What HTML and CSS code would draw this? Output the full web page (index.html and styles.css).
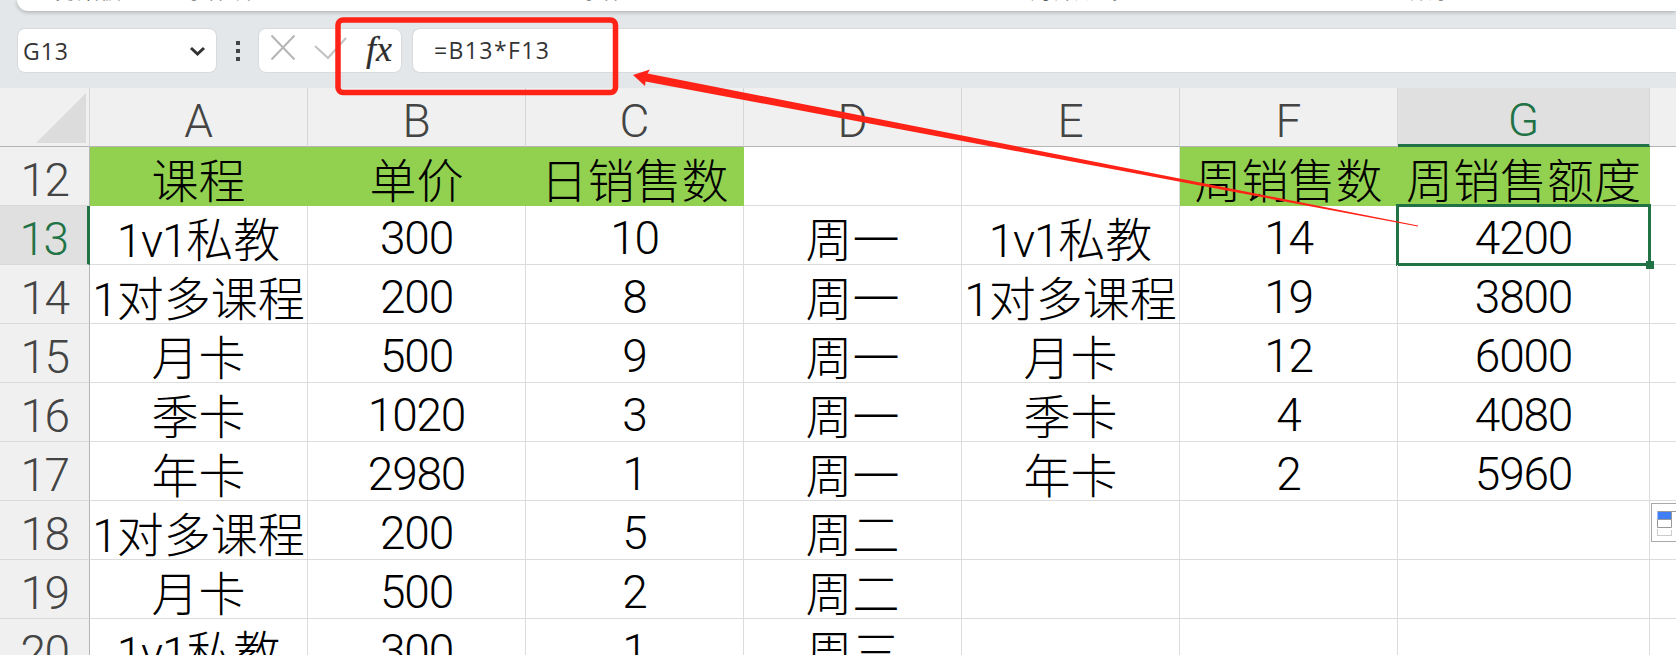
FILE: index.html
```html
<!DOCTYPE html>
<html lang="zh-CN">
<head>
<meta charset="utf-8">
<title>表格</title>
<link rel="stylesheet" href="styles.css">
</head>
<body>
<div class="app">
  <div class="ribbon">
    <span class="group-label">剪贴板</span>
    <span class="group-label">字体设置</span>
    <span class="group-label">字体</span>
    <span class="group-label">对齐方式</span>
    <span class="group-label">数字</span>
  </div>
  <div class="formula-bar">
    <div class="name-box">
      <span>G13</span>
      <svg class="chevron" width="17" height="10" viewBox="0 0 17 10"><path d="M2 2l6.500 6 6.500-6" fill="none" stroke="#333" stroke-width="3"/></svg>
    </div>
    <div class="dots"><i></i><i></i><i></i></div>
    <div class="btn-group">
      <svg class="btn-x" width="26" height="27" viewBox="0 0 26 27"><path d="M1.500 1.500l23 24M24.500 1.500l-23 24" fill="none" stroke="#b5b5b5" stroke-width="2"/></svg>
      <svg class="btn-check" width="33" height="23" viewBox="0 0 33 23"><path d="M1 9l13 12L32 1" fill="none" stroke="#c2c2c2" stroke-width="2"/></svg>
      <span class="fx">fx</span>
    </div>
    <div class="formula-input">=B13*F13</div>
  </div>
  <div class="sheet">
    <div class="corner"><svg width="90" height="59" viewBox="0 0 90 59"><path d="M86 5v50H36z" fill="#dcdcdc"/></svg></div>
    <div class="col-head">A</div><div class="col-head">B</div><div class="col-head">C</div><div class="col-head">D</div><div class="col-head">E</div><div class="col-head">F</div><div class="col-head active">G</div><div class="col-head tail"></div>

    <div class="row-head">12</div>
    <div class="cell fill">课程</div><div class="cell fill">单价</div><div class="cell fill">日销售数</div><div class="cell"></div><div class="cell"></div><div class="cell fill">周销售数</div><div class="cell fill">周销售额度</div><div class="cell tail"></div>

    <div class="row-head active">13</div>
    <div class="cell"><span class="n">1v1</span>私教</div><div class="cell n">300</div><div class="cell n">10</div><div class="cell">周一</div><div class="cell"><span class="n">1v1</span>私教</div><div class="cell n">14</div><div class="cell n selected">4200</div><div class="cell tail"></div>

    <div class="row-head">14</div>
    <div class="cell"><span class="n">1</span>对多课程</div><div class="cell n">200</div><div class="cell n">8</div><div class="cell">周一</div><div class="cell"><span class="n">1</span>对多课程</div><div class="cell n">19</div><div class="cell n">3800</div><div class="cell tail"></div>

    <div class="row-head">15</div>
    <div class="cell">月卡</div><div class="cell n">500</div><div class="cell n">9</div><div class="cell">周一</div><div class="cell">月卡</div><div class="cell n">12</div><div class="cell n">6000</div><div class="cell tail"></div>

    <div class="row-head">16</div>
    <div class="cell">季卡</div><div class="cell n">1020</div><div class="cell n">3</div><div class="cell">周一</div><div class="cell">季卡</div><div class="cell n">4</div><div class="cell n">4080</div><div class="cell tail"></div>

    <div class="row-head">17</div>
    <div class="cell">年卡</div><div class="cell n">2980</div><div class="cell n">1</div><div class="cell">周一</div><div class="cell">年卡</div><div class="cell n">2</div><div class="cell n">5960</div><div class="cell tail"></div>

    <div class="row-head">18</div>
    <div class="cell"><span class="n">1</span>对多课程</div><div class="cell n">200</div><div class="cell n">5</div><div class="cell">周二</div><div class="cell"></div><div class="cell"></div><div class="cell"></div><div class="cell tail"></div>

    <div class="row-head">19</div>
    <div class="cell">月卡</div><div class="cell n">500</div><div class="cell n">2</div><div class="cell">周二</div><div class="cell"></div><div class="cell"></div><div class="cell"></div><div class="cell tail"></div>

    <div class="row-head">20</div>
    <div class="cell"><span class="n">1v1</span>私教</div><div class="cell n">300</div><div class="cell n">1</div><div class="cell">周三</div><div class="cell"></div><div class="cell"></div><div class="cell"></div><div class="cell tail"></div>

    <div class="paste-tip">
      <svg width="25" height="39" viewBox="0 0 25 39"><rect x="5.500" y="7.500" width="14" height="8" fill="#3f7ef5"/><path d="M5.500 7.500h20M5.500 15.500h14v8h-14zM19.500 7.500v8" fill="none" stroke="#999"/><path d="M5.500 25.500v6h14v-6" fill="none" stroke="#999" stroke-dasharray="1 1"/></svg>
    </div>
  </div>
  <svg class="annotation" width="1676" height="655" viewBox="0 0 1676 655">
    <rect x="338" y="20" width="277.500" height="72.500" rx="5" fill="none" stroke="#ff2216" stroke-width="5.500"/>
    <path d="M633 75L650 69.500L647.500 73.500L1418 225.500L1418 226.500L645.500 81.500L645 86z" fill="#ff2216"/>
  </svg>
</div>
</body>
</html>
```
FILE: styles.css
```css
* { box-sizing: border-box; }
html, body { margin: 0; padding: 0; }
body { background: #e4e7e9; font-family: "Noto Sans CJK SC", sans-serif; color: #000; }

.app { position: relative; width: 1676px; height: 655px; overflow: hidden; display: flex; flex-direction: column; background: #e4e7e9; }

.ribbon { height: 11px; margin-left: 17px; background: #fff; border-radius: 0 0 0 14px; box-shadow: 0 1px 4px rgba(0,0,0,.28); display: grid; grid-template-columns: 130px 395px 450px 380px auto; padding-left: 38px; overflow: hidden; flex: none; }
.group-label { font-size: 22px; line-height: 22px; margin-top: -23px; color: #333; white-space: nowrap; }

.formula-bar { flex: none; height: 77px; padding: 17px 0 15px 17px; display: flex; align-items: stretch; }
.name-box { width: 200px; background: #fff; border: 1px solid #d8dadc; border-radius: 8px; display: flex; align-items: center; justify-content: space-between; padding: 0 10px 0 5px; font: 23px "Open Sans", sans-serif; letter-spacing: 1px; color: #333; }
.chevron { flex: none; }
.dots { width: 41px; display: flex; flex-direction: column; align-items: center; justify-content: center; gap: 4px; }
.dots i { display: block; width: 4px; height: 4px; background: #444; }
.btn-group { width: 144px; background: #fff; border: 1px solid #d8dadc; border-radius: 8px; display: flex; align-items: center; padding-left: 11px; }
.btn-x { flex: none; margin-right: 18px; margin-top: -6px; }
.btn-check { flex: none; margin-top: -5px; }
.fx { font: italic 36px "Liberation Serif", serif; color: #2e2e2e; margin-left: 19px; margin-top: -4px; -webkit-text-stroke: .2px #2e2e2e; }
.formula-input { flex: 1; margin-left: 10px; background: #fff; border: 1px solid #d8dadc; border-right: 0; border-radius: 8px 0 0 8px; padding-left: 21px; font: 23px/43px "Open Sans", sans-serif; letter-spacing: 1.400px; color: #333; }

.sheet { flex: 1; position: relative; display: grid; grid-template-columns: 90px repeat(6, 218px) 252px 1fr; grid-template-rows: 59px repeat(9, 59px); background: #fff; overflow: hidden; }
.corner { background: #f0f0f0; border-right: 1px solid #d6d6d6; border-bottom: 1px solid #b4b4b4; }
.corner svg { display: block; }
.col-head { background: #f0f0f0; border-right: 1px solid #d6d6d6; border-bottom: 1px solid #b4b4b4; display: flex; align-items: center; justify-content: center; padding-top: 8px; font: 300 46px Roboto, sans-serif; color: #444; }
.col-head.active { background: #e0e0e0; border-bottom: 3px solid #217346; color: #217346; }
.row-head { background: #f0f0f0; border-right: 1px solid #b4b4b4; border-bottom: 1px solid #d9d9d9; display: flex; align-items: center; justify-content: center; padding-top: 7px; font: 300 46px Roboto, sans-serif; letter-spacing: -1.500px; color: #444; }
.row-head.active { background: #e0e0e0; border-right: 3px solid #217346; color: #217346; }

.cell { position: relative; border-right: 1px solid #dcdcdc; border-bottom: 1px solid #dcdcdc; text-align: center; font-size: 47px; font-weight: 300; line-height: 61px; white-space: nowrap; }
.cell.fill { background: #92d050; border-color: #92d050; }
.n { font-family: Roboto, sans-serif; font-weight: 300; font-size: 46px; letter-spacing: -1.200px; }
.cell.n { line-height: 64px; }
.tail { border-right: 0; }
.col-head.tail { border-right: 0; }

.selected::after { content: ""; position: absolute; left: -2px; top: -2px; right: -2px; bottom: -2px; border: 3px solid #217346; }
.selected::before { content: ""; position: absolute; right: -5px; bottom: -5px; width: 8px; height: 8px; background: #217346; z-index: 1; }

.paste-tip { position: absolute; left: 1651px; top: 415px; width: 40px; height: 39px; background: #fff; border: 1px solid #a8a8a8; }
.paste-tip svg { display: block; }

.annotation { position: absolute; left: 0; top: 0; pointer-events: none; }
```
